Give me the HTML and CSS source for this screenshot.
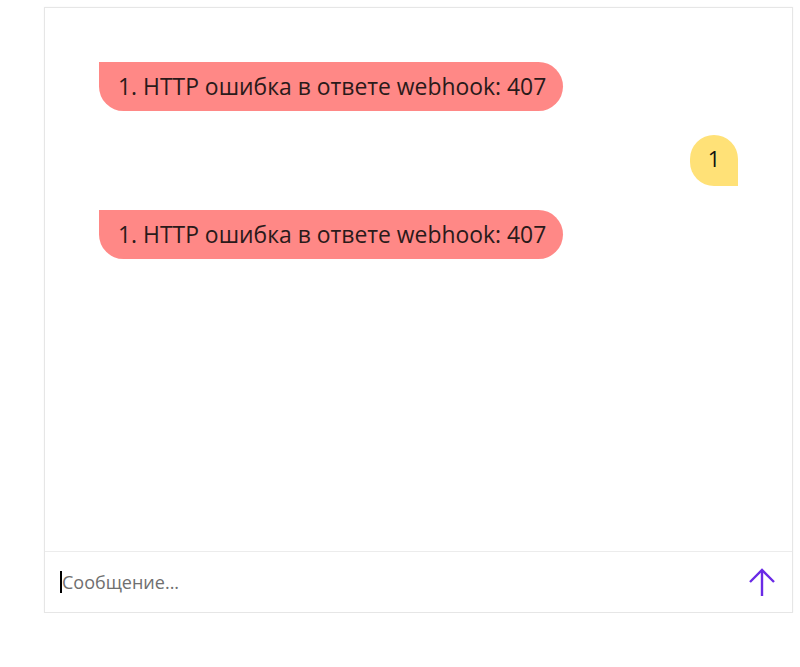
FILE: index.html
```html
<!DOCTYPE html>
<html lang="ru">
<head>
<meta charset="utf-8">
<link rel="stylesheet" href="styles.css">
</head>
<body>
<div class="chat">
  <div class="messages">
    <div class="msg bot">1. HTTP ошибка в ответе webhook: 407</div>
    <div class="msg user">1</div>
    <div class="msg bot">1. HTTP ошибка в ответе webhook: 407</div>
  </div>
  <div class="composer">
    <div class="input"><span class="caret"></span><span class="placeholder">Сообщение...</span></div>
    <button class="send" aria-label="Отправить">
      <svg width="28" height="30" viewBox="0 0 28 30" fill="none" stroke="#6a2ae6" stroke-width="2.4" stroke-linecap="butt" stroke-linejoin="miter">
        <path d="M14 3 V29"/>
        <path d="M2 15 L14 3 L26 15"/>
      </svg>
    </button>
  </div>
</div>
</body>
</html>
```
FILE: styles.css
```css
html, body {
  margin: 0;
  padding: 0;
  background: #ffffff;
}
body {
  padding: 7px 7px 0 44px;
  font-family: "Open Sans", "Noto Sans", sans-serif;
}
.chat {
  width: 747px;
  height: 604px;
  border: 1px solid #e6e6e6;
  display: flex;
  flex-direction: column;
  box-shadow: 0 0 2px rgba(0,0,0,0.04);
}
.messages {
  flex: 1;
  padding: 54px 54px 0 54px;
  display: flex;
  flex-direction: column;
  align-items: flex-start;
  gap: 24px;
}
.msg {
  font-size: 22.9px;
  line-height: 25px;
  color: #2a1a1a;
  padding: 12px 17px 12px 19px;
}
.msg.bot {
  background: #ff8886;
  border-radius: 0 25px 25px 25px;
}
.msg.user {
  align-self: flex-end;
  background: #ffe177;
  color: #111;
  width: 48px;
  height: 51px;
  box-sizing: border-box;
  padding: 0 0 4px 0;
  display: flex;
  align-items: center;
  justify-content: center;
  border-radius: 25px 25px 0 25px;
  font-size: 22px;
}
.composer {
  height: 60px;
  border-top: 1px solid #ececec;
  display: flex;
  align-items: center;
  padding: 0 16px 0 15px;
}
.input {
  flex: 1;
  display: flex;
  align-items: center;
  font-size: 18px;
  color: #6f6f6f;
}
.caret {
  width: 2px;
  height: 22px;
  background: #000;
}
.send {
  border: none;
  background: none;
  padding: 0;
  width: 28px;
  height: 30px;
  display: flex;
  align-items: center;
  justify-content: center;
  cursor: pointer;
}
```
